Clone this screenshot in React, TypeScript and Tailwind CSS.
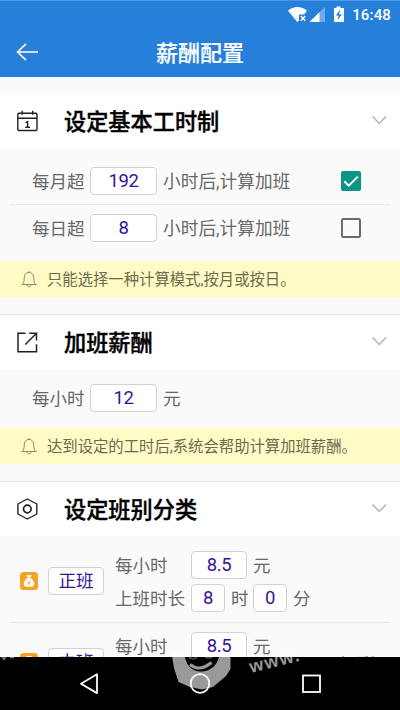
import type { ReactNode } from 'react';

function Field({ value, className }: { value: string; className: string }) {
  return (
    <div
      className={`box-border flex h-7 shrink-0 items-center justify-center rounded-[4px] border border-[#d2d2d4] bg-white pt-px text-[18.5px] leading-none tracking-[-0.45px] text-[#35129a] ${className}`}
    >
      {value}
    </div>
  );
}

function Chevron() {
  return (
    <svg width="16" height="10" viewBox="0 0 16 10" fill="none" stroke="#b4b4b4" strokeWidth="1.5">
      <path d="M1.5 .5 8.3 7.5 15 .5" />
    </svg>
  );
}

function SectionHead({ icon, title }: { icon: ReactNode; title: string }) {
  return (
    <div className="flex h-[54px] items-center bg-white pr-[13px] pl-[17px]">
      <div className="w-[47px]">{icon}</div>
      <h2 className="flex-1 pt-[2px] text-[22.2px] leading-none font-medium text-black [-webkit-text-stroke:0.4px_black]">{title}</h2>
      <Chevron />
    </div>
  );
}

function Notice({ text }: { text: string }) {
  return (
    <div className="flex h-9 items-center bg-[#fefbc5] pl-5 text-[15.35px] leading-none text-[#6c6b50]">
      <svg className="mr-[9px]" width="18" height="18" viewBox="0 0 18 18" fill="none" stroke="#827f60" strokeWidth="0.9">
        <path d="M9 1v1.2M1.5 14.5h15M2.5 14.2c1.2-1.4 1.7-2.6 1.7-5.8 0-3.6 1.9-6 4.8-6s4.8 2.4 4.8 6c0 3.2.5 4.4 1.7 5.8M7 15c.2 2.3 3.8 2.3 4 0" />
      </svg>
      <span className="pt-1">{text}</span>
    </div>
  );
}

function MoneyBag() {
  return (
    <svg className="-mt-px" width="18" height="18" viewBox="0 0 18 18">
      <rect width="18" height="18" rx="3.5" fill="#f6a229" />
      <path d="M6.3 3h5.4l-1.2 2.4h-3zM7.3 6h3.4c2.2 2 3.6 3.8 3.6 6 0 2-1.6 2.8-3.3 2.8H7c-1.7 0-3.3-.8-3.3-2.8 0-2.2 1.4-4 3.6-6z" fill="#fff" />
      <path d="M7.4 8.6 9 10.2l1.6-1.6M7.4 11h3.2M9 10v3.3" fill="none" stroke="#f6a229" strokeWidth="0.8" />
    </svg>
  );
}

function Shift({ name, extra }: { name: string; extra?: string }) {
  return (
    <div className="flex h-[61px] shrink-0 items-center pl-5">
      <MoneyBag />
      <div className="-mt-[2px] ml-[10px] flex h-7 w-14 items-center justify-center rounded-[4px] border border-[#d2d2d4] bg-white pt-[3px] text-[17.5px] leading-none text-[#35129a]">
        {name}
      </div>
      <div className="ml-[11px] flex flex-col gap-[5px]">
        <div className="flex h-7 items-center">
          <span className="w-[76px] pt-[3px]">每小时</span>
          <Field value="8.5" className="w-14" />
          <span className="ml-1.5 pt-[3px]">元</span>
        </div>
        <div className="flex h-7 items-center">
          <span className="w-[76px] pt-[3px]">上班时长</span>
          <Field value="8" className="w-[34px]" />
          <span className="ml-[6px] w-[22px] pt-[3px]">时</span>
          <Field value="0" className="w-[34px]" />
          <span className="ml-1.5 pt-[3px]">分</span>
        </div>
      </div>
      {extra && <span className="ml-auto pr-[23px] text-[14px] text-[#222]">{extra}</span>}
    </div>
  );
}

function HourRow({ label, value, checked }: { label: string; value: string; checked: boolean }) {
  return (
    <div className="flex h-7 items-center pl-8">
      <span className="w-[58px] pt-[3px]">{label}</span>
      <Field value={value} className="w-[67px]" />
      <span className="ml-1.5 w-[178px] pt-[3px] text-[17.7px] whitespace-nowrap">小时后,计算加班</span>
      <svg width="20" height="20" viewBox="0 0 20 20" fill="none">
        {checked ? (
          <>
            <rect width="20" height="20" rx="2" fill="#0b9585" />
            <path d="M3.3 10.2 7.8 14.7 16.8 5.6" stroke="#fff" strokeWidth="2" />
          </>
        ) : (
          <rect x="1" y="1" width="18" height="18" rx="1.5" stroke="#6c6c6c" strokeWidth="2" />
        )}
      </svg>
    </div>
  );
}

function StatusBar() {
  return (
    <div className="flex h-7 items-center justify-end pr-[9px] text-white">
      <svg width="58" height="18" viewBox="0 0 58 18" fill="#fff">
        <path d="M0 4.8C5.5-.2 13.5-.2 19 4.8L16 8.5H11v5.8l-1.5 2z" />
        <path d="m12.8 10 4.4 4.8m0-4.8-4.4 4.8" stroke="#fff" strokeWidth="1.4" />
        <path d="M37 .8V16H21.5z" opacity=".35" />
        <path d="M31.5 6.2V16h-10z" />
        <path d="M46 2h2.5V.5h4V2H56v14H46z" />
        <path d="m52 3.5-4 6h2.5l-.8 4.7 4-6h-2.5z" fill="#267fd8" />
      </svg>
      <span className="ml-[6px] text-[15px] leading-none font-medium tracking-[0.15px]">16:48</span>
    </div>
  );
}

function CalendarIcon() {
  return (
    <svg width="21" height="22" viewBox="0 0 21 22" fill="none" stroke="#222" strokeWidth="1.4">
      <rect x="0.8" y="3.2" width="19.2" height="17.3" rx="1.2" />
      <path d="M.8 8.2H20M5.2.8v4M15.7.8v4M8.6 12.6l2-1v5.7M8.2 17.2h4.8" />
    </svg>
  );
}

function ExportIcon() {
  return (
    <svg width="21" height="21" viewBox="0 0 21 21" fill="none" stroke="#222" strokeWidth="1.5">
      <path d="M8.5 1.2H1v18.5h18.5v-7.5M12.2 1.2h7.3v7.3M19 1.7 8.3 12.5" />
    </svg>
  );
}

function NutIcon() {
  return (
    <svg width="21" height="22" viewBox="0 0 21 22" fill="none" stroke="#222" strokeWidth="1.4">
      <path d="M10.3 1 19.8 6v10l-9.5 5L.9 16V6z" strokeLinejoin="round" />
      <circle cx="10.3" cy="11" r="3.8" strokeWidth="1.7" />
    </svg>
  );
}

function Watermark() {
  return (
    <svg className="absolute inset-0" width="400" height="710" viewBox="0 0 400 710" fill="none">
      <path
        d="M171.5 653 174 668 178.5 682 190 687 202 689.5 213 687 226 676 230.5 669V653H219.5C219 664 211 671.5 201 671.5S186 665 184 653z"
        fill="#fff"
        fillOpacity=".6"
      />
      <path d="M190 664.5q10 8 21.5-2" stroke="#fff" strokeOpacity=".6" strokeWidth="3" />
      <path d="M189 657.5q4 2.5 8 0M205 657q4 2 8-.5" stroke="#fff" strokeOpacity=".3" strokeWidth="1.5" />
      <text x="251" y="673" transform="rotate(-14 251 673)" fill="#fff" fillOpacity=".6" fontSize="18" fontWeight="700" letterSpacing="1.5" className="font-['Liberation_Sans',sans-serif]">www.</text>
      <path d="M1.5 658h3.5l-1.5 2M10 657.5h4" stroke="#fff" strokeOpacity=".5" strokeWidth="1.5" />
    </svg>
  );
}

export default function App() {
  return (
    <div className="relative flex h-[710px] w-[400px] flex-col overflow-hidden bg-[#fafafa] font-[Roboto,'Noto_Sans_CJK_SC',sans-serif] text-[17.5px] leading-none text-[#686868]">
      <header className="h-[77px] shrink-0 border-t border-[#4b9aea] bg-[#267fd8]">
        <StatusBar />
        <div className="flex h-[46px] items-center pl-4 text-white">
          <svg width="22" height="18" viewBox="0 0 22 18" fill="none" stroke="#fff" strokeWidth="1.6">
            <path d="M22 9H1.5M10 .8 1.5 9 10 17.2" />
          </svg>
          <h1 className="mr-[38px] flex-1 pt-[3px] text-center text-[22px] leading-none font-medium [-webkit-text-stroke:0.2px_white]">薪酬配置</h1>
        </div>
      </header>

      <main className="flex h-[580px] shrink-0 flex-col overflow-hidden">
        <section className="mt-[17px] shrink-0">
          <SectionHead icon={<CalendarIcon />} title="设定基本工时制" />
          <div className="pt-[19px]">
            <HourRow label="每月超" value="192" checked />
            <div className="mx-[10px] mt-[9px] mb-[9px] h-px bg-[#e9e9e9]" />
            <HourRow label="每日超" value="8" checked={false} />
          </div>
          <div className="mt-[19px]">
            <Notice text="只能选择一种计算模式,按月或按日。" />
          </div>
        </section>

        <section className="mt-[17px] shrink-0 border-t border-[#e3e3e3]">
          <SectionHead icon={<ExportIcon />} title="加班薪酬" />
          <div className="mt-[15px] flex h-7 items-center pl-8">
            <span className="w-[58px] pt-[3px]">每小时</span>
            <Field value="12" className="w-[67px]" />
            <span className="ml-1.5 pt-[3px]">元</span>
          </div>
          <div className="mt-4">
            <Notice text="达到设定的工时后,系统会帮助计算加班薪酬。" />
          </div>
        </section>

        <section className="mt-[17px] shrink-0 border-t border-[#e3e3e3]">
          <SectionHead icon={<NutIcon />} title="设定班别分类" />
          <div className="pt-[15px]">
            <Shift name="正班" />
            <div className="mx-[10px] mt-[10px] mb-[9px] h-px bg-[#e6e6e6]" />
            <Shift name="中班" extra="(可选)" />
          </div>
        </section>
      </main>

      <nav className="h-[53px] shrink-0 bg-black" />
      <Watermark />
      <svg className="absolute bottom-0 left-0" width="400" height="53" viewBox="0 0 400 53" fill="none" stroke="#fff" strokeWidth="1.8">
        <path d="M97 17.3v18.8L81 26.7z" strokeLinejoin="round" />
        <circle cx="200" cy="26.5" r="9.3" />
        <rect x="303" y="18.5" width="17" height="16.5" />
      </svg>
    </div>
  );
}
